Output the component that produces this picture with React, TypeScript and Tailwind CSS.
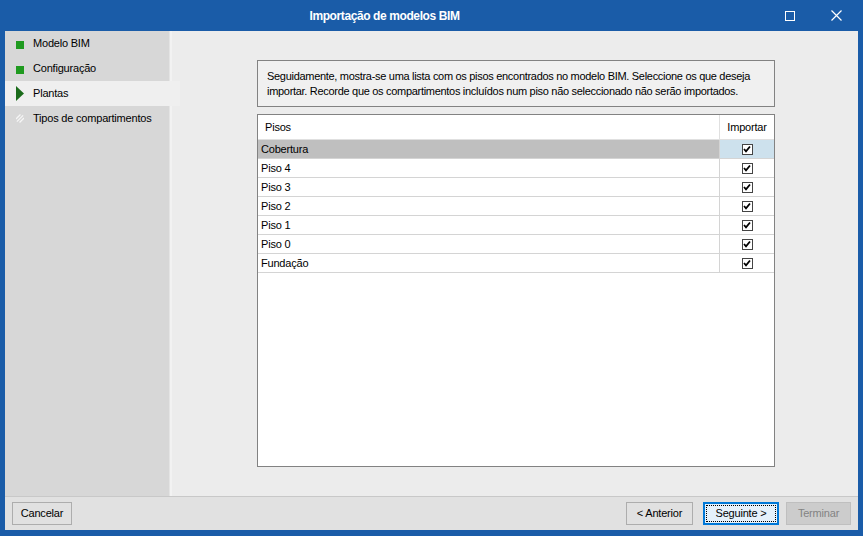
import React from "react";

const rows = ["Cobertura", "Piso 4", "Piso 3", "Piso 2", "Piso 1", "Piso 0", "Fundação"];

function Check() {
  return (
    <div className="w-[11px] h-[11px] border border-[#444] bg-white flex items-center justify-center">
      <svg width="8" height="8" viewBox="0 0 8 8">
        <path d="M1 4 L3 6.3 L7 1.5" stroke="#000" strokeWidth="1.8" fill="none" />
      </svg>
    </div>
  );
}

function SideItem({ label, icon, selected }: { label: string; icon: "sq" | "tri" | "hatch"; selected?: boolean }) {
  return (
    <div className={`h-[25px] flex items-center pl-[11px] whitespace-nowrap ${selected ? "bg-[#efefef] w-[175px] relative z-10" : ""}`}>
      <div className="w-[8px] h-[16px] flex items-center justify-center mr-[9px]">
        {icon === "sq" && <div className="w-[8px] h-[8px] bg-[#1f9a1f] mt-[3px]" />}
        {icon === "tri" && (
          <svg width="8" height="15" viewBox="0 0 8 15">
            <path d="M0 0 L8 7.5 L0 15 Z" fill="#1a6b1a" />
          </svg>
        )}
        {icon === "hatch" && (
          <svg width="9" height="9" viewBox="0 0 9 9">
            <path d="M0 5 L5 0 M1 8 L8 1 M4 9 L9 4" stroke="#f6f6f6" strokeWidth="1.4" />
          </svg>
        )}
      </div>
      <span className="text-[11px] tracking-[-0.2px] text-black">{label}</span>
    </div>
  );
}

export default function App() {
  return (
    <div
      className="w-[863px] h-[536px] bg-[#1a5ca8] flex flex-col px-[5px] pb-[6px] overflow-hidden"
      style={{ fontFamily: '"Liberation Sans", Arial, sans-serif' }}
    >
      <div className="h-[31px] flex items-center relative text-white">
        <div className="absolute left-0 right-[94px] text-center text-[12px] font-bold tracking-[-0.4px]">
          Importação de modelos BIM
        </div>
        <div className="ml-auto flex items-center">
          <div className="w-[46px] h-[31px] flex items-center justify-center">
            <div className="w-[10px] h-[10px] border border-white" />
          </div>
          <div className="w-[46px] h-[31px] flex items-center justify-center mr-[-1px]">
            <svg width="11" height="11" viewBox="0 0 11 11">
              <path d="M0.5 0.5 L10.5 10.5 M10.5 0.5 L0.5 10.5" stroke="#fff" strokeWidth="1.2" />
            </svg>
          </div>
        </div>
      </div>
      <div className="flex-1 flex flex-col bg-[#ececec]">
        <div className="flex-1 flex">
          <div className="w-[164px] bg-[#d7d7d7] flex flex-col">
            <SideItem label="Modelo BIM" icon="sq" />
            <SideItem label="Configuração" icon="sq" />
            <SideItem label="Plantas" icon="tri" selected />
            <SideItem label="Tipos de compartimentos" icon="hatch" />
          </div>
          <div className="w-[3px] bg-[#f2f2f2] border-l border-[#e4e4e4]" />
          <div className="flex-1 pl-[85px] pr-[83px] pt-[29px] pb-[29px] flex flex-col gap-[7px]">
            <div className="h-[47px] border border-[#828282] bg-[#f0f0f0] px-[9px] pt-[8px] text-[11px] tracking-[-0.3px] leading-[15px] text-black">
              Seguidamente, mostra-se uma lista com os pisos encontrados no modelo BIM. Seleccione os que deseja importar. Recorde que os compartimentos incluídos num piso não seleccionado não serão importados.
            </div>
            <div className="flex-1 border border-[#828282] bg-white flex flex-col text-[11px] tracking-[-0.2px]">
              <div className="h-[25px] flex border-b border-[#e0e0e0]">
                <div className="flex-1 flex items-center pl-[7px]">Pisos</div>
                <div className="w-[55px] flex items-center justify-center border-l border-[#e0e0e0]">Importar</div>
              </div>
              {rows.map((r, i) => (
                <div key={r} className="h-[19px] flex border-b border-[#d4d4d4]">
                  <div className={`flex-1 flex items-center pl-[3px] ${i === 0 ? "bg-[#bfbfbf]" : ""}`}>{r}</div>
                  <div className={`w-[55px] flex items-center justify-center border-l border-[#d4d4d4] ${i === 0 ? "bg-[#cde1ed]" : ""}`}>
                    <Check />
                  </div>
                </div>
              ))}
            </div>
          </div>
        </div>
        <div className="h-[34px] bg-[#e1e1e1] border-t border-[#c8c8c8] flex items-center px-[7px] text-[11px] tracking-[-0.2px]">
          <div className="w-[60px] h-[23px] border border-[#adadad] bg-[#e1e1e1] flex items-center justify-center">Cancelar</div>
          <div className="ml-auto flex items-center">
            <div className="w-[67px] h-[23px] border border-[#adadad] bg-[#e1e1e1] flex items-center justify-center">&lt; Anterior</div>
            <div className="ml-[10px] w-[76px] h-[23px] border-2 border-[#0078d7] bg-[#e5f1fb] flex items-center justify-center p-[1px]">
              <div className="w-full h-full border border-dotted border-black flex items-center justify-center">Seguinte &gt;</div>
            </div>
            <div className="ml-[7px] w-[65px] h-[23px] border border-[#bfbfbf] bg-[#cccccc] text-[#838383] flex items-center justify-center">Terminar</div>
          </div>
        </div>
      </div>
    </div>
  );
}
